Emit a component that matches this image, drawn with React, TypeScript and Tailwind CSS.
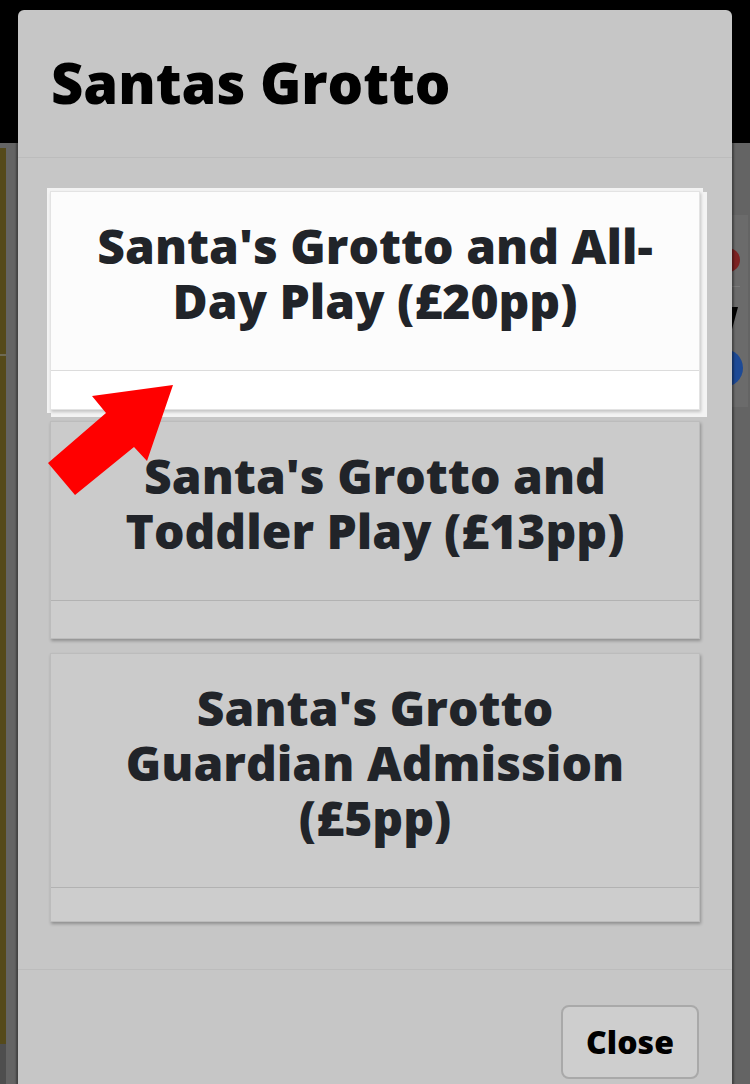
import React from "react";

const font = { fontFamily: '"Open Sans", "Noto Sans", sans-serif' };

function Card({
  lines,
  selected,
  className,
  footer,
}: {
  lines: string;
  selected?: boolean;
  className?: string;
  footer: string;
}) {
  return (
    <div
      className={
        "w-[650px] border flex flex-col " +
        (selected
          ? "border-[#e3e3e3] bg-white shadow-[1px_2px_3px_rgba(0,0,0,0.2),0_0_0_3px_#f3f3f3,4px_4px_0_3px_#f3f3f3] "
          : "border-[#bcbcbc] bg-[#cbcbcb] shadow-[1px_2px_3px_rgba(0,0,0,0.28)] ") +
        (className ?? "")
      }
    >
      <div
        className={
          "pt-[26px] pb-[42px] px-[34px] text-center text-[48px] leading-[55px] font-extrabold text-[#212429] border-b " +
          (selected ? "bg-[#fcfcfc] border-[#dcdcdc]" : "bg-[#cbcbcb] border-[#b2b2b2]")
        }
      >
        {lines}
      </div>
      <div className={footer + " " + (selected ? "bg-white" : "bg-[#cdcdcd]")} />
    </div>
  );
}

export default function App() {
  return (
    <div className="relative w-[750px] h-[1084px] overflow-hidden bg-[#646464]" style={font}>
      {/* background page (dimmed) */}
      <div className="flex flex-col h-full">
        <div className="h-[143px] bg-black shrink-0" />
        <div className="flex flex-1">
          <div className="w-[6px] flex flex-col pt-[5px]">
            <div className="h-[206px] bg-[#554a1b]" />
            <div className="h-[2px] bg-[#6e6a55]" />
            <div className="h-[688px] bg-[#554a1b]" />
            <div className="flex-1 bg-[#4e4e4e]" />
          </div>
          <div className="flex-1" />
          <div className="w-[50px] pt-[72px] pr-[2px]">
            <div className="h-[192px] bg-[#6b6b6b] flex flex-col items-end pr-[8px] pt-[33px]">
              <div className="w-[24px] h-[24px] rounded-full bg-[#7d2222]" />
              <div className="mt-[14px] w-[30px] h-[1px] bg-[#7a7a7a]" />
              <div className="mt-[14px] text-[50px] leading-[46px] font-extrabold italic text-black pr-[4px]">!</div>
              <div className="mt-[2px] -mr-[3px] w-[38px] h-[38px] rounded-full bg-[#1d4a96]" />
            </div>
          </div>
        </div>
      </div>

      {/* modal */}
      <div className="absolute left-[18px] top-[10px] w-[714px] h-[1100px] bg-[#c6c6c6] rounded-t-[6px] shadow-[-2px_0_2px_rgba(0,0,0,0.35),2px_0_2px_rgba(0,0,0,0.35)] flex flex-col">
        <div className="h-[148px] shrink-0 flex items-center pl-[33px] border-b border-[#bcbcbc]">
          <h1 className="text-[56px] font-extrabold text-black leading-none pb-[4px]">Santas Grotto</h1>
        </div>
        <div className="px-[32px] pt-[33px] pb-[47px] flex flex-col border-b border-[#bcbcbc]">
          <Card selected lines="Santa's Grotto and All-Day Play (£20pp)" footer="h-[38px]" className="mb-[11px]" />
          <Card lines="Santa's Grotto and Toddler Play (£13pp)" footer="h-[37px]" className="mb-[14px]" />
          <Card lines="Santa's Grotto Guardian Admission (£5pp)" footer="h-[33px]" />
        </div>
        <div className="flex justify-end pr-[33px] pt-[35px]">
          <button className="w-[138px] h-[74px] rounded-[8px] border-2 border-[#a9a9a9] bg-[#cecece] text-[32px] font-extrabold text-black">
            Close
          </button>
        </div>
      </div>

      {/* red arrow annotation */}
      <svg className="absolute left-0 top-0 pointer-events-none" width="750" height="1084" viewBox="0 0 750 1084">
        <polygon
          points="173,385 92,396 106,413 48,463 75,495 134,447 147,461"
          fill="#ff0000"
        />
      </svg>
    </div>
  );
}
